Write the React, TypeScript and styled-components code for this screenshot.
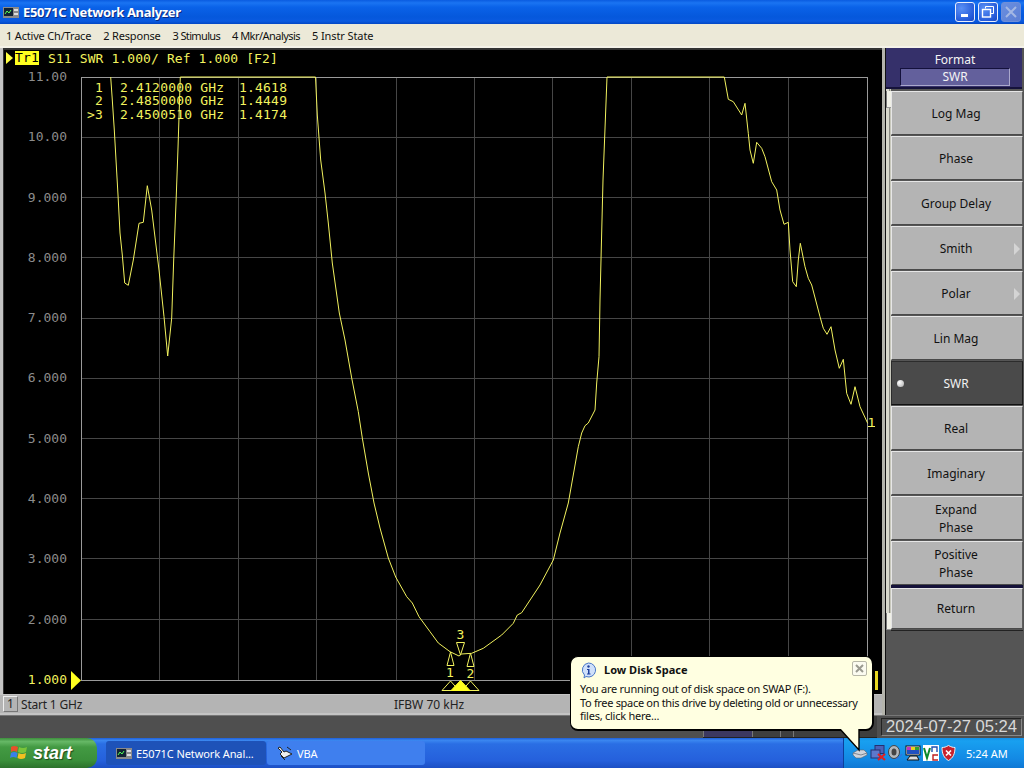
import React from 'react';
import styled, { createGlobalStyle } from 'styled-components';

const GlobalStyle = createGlobalStyle`
  html, body {
    margin: 0;
    padding: 0;
    width: 1024px;
    height: 768px;
    overflow: hidden;
    background: #000;
  }
  * { box-sizing: border-box; }
`;

const UI_FONT = '"Noto Sans", "DejaVu Sans", sans-serif';
const MONO_FONT = '"DejaVu Sans Mono", "Liberation Mono", monospace';

// Trace points in page pixels, read off the analyzer screen
const TRACE: [number, number][] = [
  [110.7, 77], [112.3, 100], [114.3, 130], [116, 160], [118, 195], [120, 233], [122.3, 255], [124.7, 283],
  [128.3, 285.3], [133.3, 260], [139, 223.3], [143.3, 222.3], [147.3, 185.7], [151.7, 210], [159, 270],
  [164, 316.7], [167.7, 356], [171.7, 318], [173.7, 260], [176, 203], [178, 148], [180.3, 77],
  [315.5, 77], [317.3, 115], [320.7, 160], [325, 193], [328.3, 223], [332.3, 263], [339.3, 313], [345, 340],
  [351.7, 378], [358.3, 411.7], [362.3, 438], [368.3, 473], [374, 503], [380, 528], [388.3, 558], [395.7, 577],
  [406.7, 596.7], [412.3, 603], [419, 616.7], [430, 631.7], [438.3, 643], [450, 651.7], [459, 656], [461.7, 654],
  [471.7, 653.3], [483.3, 648.3], [501.7, 635], [513.3, 623.3], [517.3, 615], [521.7, 612.7], [540, 585],
  [553.3, 560], [560, 533], [568.3, 503], [578.3, 446.7], [581.7, 433], [585, 425.7], [588.3, 423], [595, 410],
  [596.7, 383], [599, 356.7], [600, 300], [603, 180], [607, 77],
  [724.3, 77], [728.3, 99.3], [733.3, 101.7], [741.7, 115], [745, 103.3], [748.3, 133.3], [750, 150],
  [753.3, 163.3], [756.7, 142.3], [761.7, 148.3], [765, 156.7], [771.7, 181.7], [776.7, 190], [780, 210],
  [784, 224.3], [788.3, 222.3], [790, 250], [792.7, 281.7], [796.3, 286.7], [798.3, 260], [800.3, 243.3],
  [805, 266.7], [808.3, 278.3], [811.7, 285], [820, 316.7], [823.3, 328.3], [827, 334.3], [831, 326.7],
  [835, 350], [839.3, 368.3], [843.3, 359.3], [846.7, 393.3], [851, 404.3], [855, 386.7], [860, 406.7], [867.7, 423.3],
];

const GRID_X = [159, 238, 316, 396, 474, 552, 631, 709, 788];
const GRID_Y = [137, 197, 257, 318, 378, 438, 498, 558, 619];
const AXIS_LABELS = ['11.00', '10.00', '9.000', '8.000', '7.000', '6.000', '5.000', '4.000', '3.000', '2.000', '1.000'];

const MENU_ITEMS = [
  { label: '1 Active Ch/Trace', spacing: -0.18 },
  { label: '2 Response', spacing: -0.18 },
  { label: '3 Stimulus', spacing: -0.65 },
  { label: '4 Mkr/Analysis', spacing: -0.54 },
  { label: '5 Instr State', spacing: -0.1 },
];

const MARKERS = [
  { id: '1', freq: '2.4120000 GHz', value: '1.4618' },
  { id: '2', freq: '2.4850000 GHz', value: '1.4449' },
  { id: '>3', freq: '2.4500510 GHz', value: '1.4174' },
];

const SOFTKEYS: { label: string[]; arrow?: boolean; active?: boolean }[] = [
  { label: ['Log Mag'] },
  { label: ['Phase'] },
  { label: ['Group Delay'] },
  { label: ['Smith'], arrow: true },
  { label: ['Polar'], arrow: true },
  { label: ['Lin Mag'] },
  { label: ['SWR'], active: true },
  { label: ['Real'] },
  { label: ['Imaginary'] },
  { label: ['Expand', 'Phase'] },
  { label: ['Positive', 'Phase'] },
];

const Screen = styled.div`
  width: 1024px;
  height: 768px;
  display: flex;
  flex-direction: column;
  position: relative;
  overflow: hidden;
  font-family: ${UI_FONT};
`;

const TitleBar = styled.div`
  height: 24px;
  flex: none;
  display: flex;
  align-items: center;
  padding: 0 3px 0 3px;
  background: linear-gradient(180deg, #0a5be0 0%, #1a74f2 12%, #0a62e8 30%, #0558dc 70%, #0a5ae0 88%, #0347c4 100%);
`;

const WindowTitle = styled.div`
  margin-left: 4px;
  flex: 1;
  color: #fff;
  font: bold 13px "Noto Sans", sans-serif;
  letter-spacing: -0.35px;
  text-shadow: 1px 1px 0 #0a2a80;
`;

const WindowButton = styled.div<{ $disabled?: boolean }>`
  width: 20px;
  height: 20px;
  margin-left: 3px;
  border: 1px solid ${({ $disabled }) => ($disabled ? '#6f8fd8' : '#e8eefc')};
  border-radius: 3px;
  background: ${({ $disabled }) =>
    $disabled
      ? 'linear-gradient(135deg, #6a8fe0, #5c7fd4)'
      : 'radial-gradient(circle at 30% 30%, #5a90f5, #2358d8 75%, #1c48bc)'};
  display: flex;
  align-items: center;
  justify-content: center;
`;

const MenuBar = styled.div`
  height: 22px;
  flex: none;
  display: flex;
  align-items: center;
  gap: 12px;
  padding: 0 6px 0 6px;
  background: #ece9d8;
  font-size: 11px;
  color: #111;
`;

const MenuItem = styled.span<{ $spacing: number }>`
  letter-spacing: ${({ $spacing }) => $spacing}px;
`;

const Workspace = styled.div`
  height: 669px;
  flex: none;
  display: flex;
  background: #b8b8b0;
  border-top: 2px solid #f4f2e8;
`;

const ChartColumn = styled.div`
  width: 882px;
  flex: none;
  display: flex;
  flex-direction: column;
  background: #c4c4c4;
  padding-left: 3px;
`;

const ChartPanel = styled.div`
  height: 646px;
  flex: none;
  background: #000;
  border-top: 2px solid #333;
  border-left: 1px solid #333;
  display: flex;
  flex-direction: column;
`;

const TraceHeader = styled.div`
  height: 16px;
  flex: none;
  display: flex;
  align-items: center;
  padding-left: 2px;
  font: 13px ${MONO_FONT};
  letter-spacing: 0.1px;
  color: #f2f25e;
  white-space: pre;
`;

const ActiveArrow = styled.span`
  width: 0;
  height: 0;
  border-left: 7px solid #ffff40;
  border-top: 6px solid transparent;
  border-bottom: 6px solid transparent;
  margin-right: 2px;
`;

const TraceBadge = styled.span`
  background: #ffff20;
  color: #000;
  width: 24px;
  text-align: center;
  margin-right: 9px;
  line-height: 14px;
`;

const PlotRow = styled.div`
  flex: 1;
  display: flex;
  position: relative;
`;

const AxisColumn = styled.div`
  width: 66px;
  flex: none;
  height: 621px;
  padding: 4px 3px 0 0;
  display: flex;
  flex-direction: column;
  justify-content: space-between;
  align-items: flex-end;
  font: 13px/14px ${MONO_FONT};
`;

const AxisLabel = styled.span<{ $live?: boolean }>`
  color: ${({ $live }) => ($live ? '#f2f25e' : '#8c8c8c')};
`;

const PlotSvg = styled.svg`
  width: 812px;
  height: 628px;
  flex: none;
  display: block;
`;

const MarkerTable = styled.div`
  position: absolute;
  left: 76px;
  top: 15px;
  display: grid;
  grid-template-columns: 23px 136px auto;
  font: 13px/13.4px ${MONO_FONT};
  letter-spacing: 0.2px;
  color: #f2f25e;
  white-space: pre;
`;

const MarkerId = styled.span`
  text-align: right;
`;

const MarkerFreq = styled.span`
  padding-left: 17px;
`;

const StatusRow = styled.div`
  height: 18px;
  flex: none;
  margin-top: 1px;
  display: flex;
  align-items: center;
  background: #b4b4b4;
  font-size: 12px;
  color: #222;
  margin-left: -3px;
`;

const ChannelBox = styled.span`
  width: 15px;
  height: 16px;
  margin-left: 3px;
  border: 1px solid #eee;
  border-right-color: #777;
  border-bottom-color: #777;
  text-align: center;
  line-height: 14px;
`;

const StatusStart = styled.span`
  margin-left: 3px;
  width: 373px;
  letter-spacing: -0.2px;
`;

const SplitterGutter = styled.div`
  width: 4px;
  flex: none;
  background: #b4b4ac;
  border-right: 1px solid #111;
`;

const KeyColumn = styled.div`
  width: 138px;
  flex: none;
  display: flex;
  flex-direction: column;
  background: #555;
`;

const FormatHeader = styled.div`
  height: 41px;
  flex: none;
  margin-right: 2px;
  padding: 3px 0 0 2px;
  background: #35306a;
  border-bottom: 2px solid #15123a;
  display: flex;
  flex-direction: column;
  align-items: center;
  color: #f4f4f4;
  font-size: 12px;
  line-height: 17px;
`;

const FormatValue = styled.div`
  width: 110px;
  height: 18px;
  background: #63609c;
  border: 1px solid #aaa8cc;
  border-top-color: #14113c;
  border-left-color: #14113c;
  text-align: center;
  font-size: 12px;
  line-height: 16px;
`;

const KeyArea = styled.div`
  flex: 1;
  display: flex;
  min-height: 0;
`;

const KeyScroll = styled.div`
  width: 5px;
  height: 541px;
  flex: none;
  padding-top: 2px;
  display: flex;
  flex-direction: column;
  justify-content: space-between;
  background: linear-gradient(90deg, #d8d8cc 0 3px, #8c8c84 3px 4px, #c8c8bc 4px 5px);
`;

const ScrollGrip = styled.div`
  width: 5px;
  height: 17px;
  background: #f0f0e6;
  border-left: 1px solid #777;
  border-bottom: 1px solid #999;
`;

const KeyStack = styled.div`
  width: 132px;
  flex: none;
  display: flex;
  flex-direction: column;
  padding-top: 2px;
`;

const SoftKey = styled.div<{ $active?: boolean }>`
  position: relative;
  height: 44px;
  flex: none;
  margin-bottom: 1px;
  padding: 2px 2px 0 0;
  display: flex;
  flex-direction: column;
  align-items: center;
  justify-content: center;
  background: ${({ $active }) => ($active ? '#4a4a4a' : '#b4b4b4')};
  border: 1px solid;
  border-color: ${({ $active }) => ($active ? '#2c2c2c #1c1c1c #111 #2c2c2c' : '#e6e6e6 #5e5e5e #4a4a4a #e6e6e6')};
  color: ${({ $active }) => ($active ? '#f2f2f2' : '#111')};
  font-size: 12px;
  line-height: 18px;
`;

const ActiveDot = styled.span`
  position: absolute;
  left: 5px;
  top: 18px;
  width: 7px;
  height: 7px;
  border-radius: 50%;
  background: radial-gradient(circle at 35% 35%, #fff, #aaa);
`;

const KeyArrow = styled.span`
  position: absolute;
  right: 2px;
  top: 16px;
  width: 0;
  height: 0;
  border-left: 6px solid #d4d4d4;
  border-top: 6px solid transparent;
  border-bottom: 6px solid transparent;
`;

const KeyDivider = styled.div`
  height: 3px;
  flex: none;
  margin-top: -1px;
  background: #15123a;
`;

const ReturnKey = styled(SoftKey)`
  height: 41px;
  padding-top: 0;
`;

const KeyFiller = styled.div`
  flex: 1;
  background: #555;
  border-top: 1px solid #222;
`;

const InfoBand = styled.div`
  height: 23px;
  flex: none;
  display: flex;
  align-items: center;
  justify-content: flex-end;
  padding-right: 2px;
  background: #4f4f4f;
  border-top: 1px solid #777;
`;

const BandCells = styled.div`
  align-self: stretch;
  display: flex;
  margin-right: 4px;
  border-bottom: 1px solid #222;
`;

const BandCell = styled.div<{ $width: number; $tint?: boolean }>`
  width: ${({ $width }) => $width}px;
  background: ${({ $tint }) => ($tint ? '#3c3860' : '#3e3e3e')};
  border-left: 1px solid #777;
`;

const ClockBox = styled.div`
  width: 141px;
  height: 18px;
  border: 1px solid #888;
  border-top-color: #222;
  border-left-color: #222;
  color: #d8d8d8;
  font: 16.6px/16px "Liberation Sans", sans-serif;
  text-align: center;
  white-space: nowrap;
`;

const Taskbar = styled.div`
  flex: 1;
  display: flex;
  align-items: center;
  background: linear-gradient(180deg, #1f5fd8 0%, #3a86f0 8%, #2a6ee4 20%, #2560dc 75%, #1c4fc4 100%);
`;

const StartButton = styled.div`
  width: 97px;
  height: 100%;
  display: flex;
  align-items: center;
  gap: 5px;
  padding-left: 10px;
  border-radius: 0 10px 10px 0;
  background: linear-gradient(180deg, #3d8f3d 0%, #66b866 12%, #439a43 30%, #3a8f3a 75%, #2c722c 100%);
  color: #fff;
  font: italic bold 18px "Liberation Sans", sans-serif;
  text-shadow: 1px 1px 1px #1c4a1c;
`;

const TaskButton = styled.div<{ $active?: boolean }>`
  width: ${({ $active }) => ($active ? '160px' : '158px')};
  height: 24px;
  margin-left: ${({ $active }) => ($active ? '9px' : '1px')};
  display: flex;
  align-items: center;
  gap: 4px;
  padding-left: 10px;
  border-radius: 3px;
  background: ${({ $active }) => ($active ? '#1e52b8' : '#3f7fee')};
  color: #fff;
  font-size: 11px;
  letter-spacing: -0.1px;
  white-space: nowrap;
`;

const Tray = styled.div`
  margin-left: auto;
  width: 181px;
  height: 100%;
  display: flex;
  align-items: center;
  padding-left: 8px;
  gap: 2px;
  background: linear-gradient(180deg, #1590e8 0%, #18a0f0 10%, #1389e4 70%, #0f78d4 100%);
  border-left: 1px solid #0c3f9c;
  color: #fff;
  font-size: 11px;
`;

const TrayClock = styled.span`
  margin-left: 8px;
`;

const Balloon = styled.div`
  position: absolute;
  left: 570px;
  top: 656px;
  width: 304px;
  height: 75px;
  background: #ffffe1;
  border: 1px solid #000;
  border-right-width: 2px;
  border-bottom-width: 2px;
  border-radius: 8px;
  padding: 5px 9px;
  color: #111;
  font-size: 11px;
  line-height: 13.5px;
`;

const BalloonTitle = styled.div`
  display: flex;
  align-items: center;
  gap: 7px;
  font-weight: bold;
  height: 16px;
  margin-bottom: 4px;
`;

const BalloonLine = styled.div<{ $spacing: number }>`
  letter-spacing: ${({ $spacing }) => $spacing}px;
  white-space: nowrap;
`;

const BalloonClose = styled.div`
  position: absolute;
  right: 5px;
  top: 4px;
  width: 15px;
  height: 15px;
  border: 1px solid #b8b8a8;
  border-radius: 2px;
  background: #fbfbf0;
  display: flex;
  align-items: center;
  justify-content: center;
`;

const BalloonTail = styled.svg`
  position: absolute;
  left: 838px;
  top: 729px;
  width: 24px;
  height: 24px;
`;

const AppIcon = () => (
  <svg width="16" height="11" viewBox="0 0 16 11">
    <rect width="16" height="11" fill="#8a8a8a" />
    <rect x="1" y="1" width="9" height="8" fill="#123" />
    <path d="M2 7 L4 4 L6 6 L8 3" stroke="#5f5" fill="none" />
    <rect x="11" y="2" width="4" height="2" fill="#ddd" />
    <rect x="11" y="6" width="4" height="2" fill="#ddd" />
  </svg>
);

const XpFlag = () => (
  <svg width="18" height="18" viewBox="0 0 18 18">
    <path d="M1 3 Q4 1 8 3 L7 8 Q4 6 1 8 Z" fill="#e8502a" />
    <path d="M9 3 Q13 5 17 3 L16 8 Q12 10 8 8 Z" fill="#7ac43a" />
    <path d="M1 9 Q4 7 7.5 9 L6.5 14 Q3.5 12 0 14 Z" fill="#3a80e8" />
    <path d="M8.5 9 Q12 11 16 9 L15 14 Q11 16 7.5 14 Z" fill="#f4c020" />
  </svg>
);

const VbaIcon = () => (
  <svg width="16" height="16" viewBox="0 0 16 16">
    <path d="M1 3 L5 7 L3 9 L7 13 L15 9 L9 6 L7 7 L3 2 Z" fill="#eee" stroke="#222" />
    <path d="M10 2 L14 5 M4 11 L8 15" stroke="#222" />
  </svg>
);

const InfoIcon = () => (
  <svg width="17" height="17" viewBox="0 0 17 17">
    <path d="M8.5 1 A7 7 0 1 1 6 14.5 L4 16 L4.5 13 A7 7 0 0 1 8.5 1 Z" fill="#cfe0fa" stroke="#4a78c8" />
    <circle cx="8.5" cy="4.5" r="1.2" fill="#1c3f9c" />
    <path d="M7 7 H9.5 V11.5 H10.5 V12.5 H7 V11.5 H8 V8 H7 Z" fill="#1c3f9c" />
  </svg>
);

const TrayIcons = () => (
  <>
    <svg width="16" height="14" viewBox="0 0 16 14">
      <path d="M1 7 L6 4 H12 L15 7 V9 L9 12 H4 L1 9 Z" fill="#cfd4dc" stroke="#5c6470" strokeWidth="0.6" />
      <path d="M1 7 L9 9 L15 7" fill="none" stroke="#6c7480" strokeWidth="0.8" />
    </svg>
    <svg width="16" height="16" viewBox="0 0 16 16">
      <rect x="5" y="0.5" width="9" height="8" fill="#4a62b8" stroke="#243070" />
      <rect x="1" y="5" width="9" height="8" fill="#5c78cc" stroke="#243070" />
      <path d="M8 9 L15 15 M15 9 L8 15" stroke="#e02020" strokeWidth="2.2" />
    </svg>
    <svg width="15" height="16" viewBox="0 0 15 16">
      <ellipse cx="6" cy="7" rx="5.5" ry="6.5" fill="#b4b8bc" stroke="#444" />
      <ellipse cx="6" cy="7" rx="2.5" ry="3.5" fill="#444" />
      <path d="M8 14 Q12 13 14 9" stroke="#3a6ae0" fill="none" />
    </svg>
    <svg width="16" height="16" viewBox="0 0 16 16">
      <rect x="1" y="1" width="14" height="9" fill="#fff" stroke="#111" />
      <rect x="2" y="2" width="4" height="3" fill="#c030c0" />
      <rect x="6" y="2" width="4" height="3" fill="#e8d020" />
      <rect x="10" y="2" width="4" height="3" fill="#30a030" />
      <rect x="2" y="5" width="12" height="4" fill="#2050c0" />
      <path d="M5 11 H12 L14 15 H2 Z" fill="#ddd" stroke="#111" />
    </svg>
    <svg width="16" height="16" viewBox="0 0 16 16">
      <rect width="16" height="16" fill="#fff" />
      <path d="M1 3 L4 13 L7 3" fill="none" stroke="#0a8a2a" strokeWidth="2" />
      <path d="M9 7 V2 H14 V7" fill="none" stroke="#2050b0" strokeWidth="1.4" />
      <path d="M15 10 H10 V15 H15" fill="none" stroke="#c02020" strokeWidth="1.4" />
    </svg>
    <svg width="15" height="16" viewBox="0 0 15 16">
      <path d="M7.5 0.5 C10 2 12 2.5 14 2.5 C14 9 12 13 7.5 15.5 C3 13 1 9 1 2.5 C3 2.5 5 2 7.5 0.5 Z" fill="#c8202c" stroke="#eee" />
      <path d="M5 5.5 L10 10.5 M10 5.5 L5 10.5" stroke="#fff" strokeWidth="1.6" />
    </svg>
  </>
);

const MarkerGlyphs = () => {
  const yellow = '#f2f25e';
  return (
    <g fill="none" stroke={yellow} strokeWidth="1">
      <path d="M450.5 652 L447 665.5 H454 Z" />
      <path d="M470.5 653 L467 666.5 H474 Z" />
      <path d="M456.5 642.5 H464.5 L460.5 655 Z" />
      <path d="M442 690.5 L450.5 681 L459 690.5 Z" />
      <path d="M462 690.5 L470.5 681 L479 690.5 Z" />
      <path d="M451 690.5 L460.5 680.5 L470 690.5 Z" fill="#ffff20" stroke="#ffff20" />
      <g stroke="none" fill={yellow} fontFamily={MONO_FONT} fontSize="13" textAnchor="middle">
        <text x="450" y="677">1</text>
        <text x="470.5" y="678">2</text>
        <text x="460.5" y="639">3</text>
        <text x="871.5" y="427">1</text>
      </g>
      <path d="M868 426.5 H875" />
    </g>
  );
};

const TracePlot = () => {
  const points = TRACE.map(([x, y]) => `${x},${y}`).join(' ');
  return (
    <PlotSvg viewBox="70 66 812 628">
      {GRID_X.map((x) => (
        <line key={x} x1={x + 0.5} x2={x + 0.5} y1={77} y2={680} stroke="#464646" />
      ))}
      {GRID_Y.map((y) => (
        <line key={y} x1={81} x2={867} y1={y + 0.5} y2={y + 0.5} stroke="#464646" />
      ))}
      <rect x={81.5} y={77.5} width={786} height={603} fill="none" stroke="#9a9a9a" />
      <polyline points={points} fill="none" stroke="#f2f25e" strokeWidth="1" />
      <path d="M71 671 L81 680.5 L71 690 Z" fill="#ffff20" />
      <path d="M878 671 H875 V690 H878 Z" fill="#e8d820" />
      <MarkerGlyphs />
    </PlotSvg>
  );
};

const App: React.FC = () => {
  return (
    <Screen>
      <GlobalStyle />
      <TitleBar>
        <AppIcon />
        <WindowTitle>E5071C Network Analyzer</WindowTitle>
        <WindowButton>
          <svg width="12" height="12" viewBox="0 0 12 12"><rect x="2" y="8" width="7" height="3" fill="#fff" /></svg>
        </WindowButton>
        <WindowButton>
          <svg width="14" height="14" viewBox="0 0 14 14" fill="none" stroke="#fff">
            <path d="M4.5 3.5 V1.5 H12.5 V8.5 H10" />
            <rect x="1.5" y="4.5" width="8" height="7.5" strokeWidth="1.4" />
          </svg>
        </WindowButton>
        <WindowButton $disabled>
          <svg width="14" height="14" viewBox="0 0 14 14" stroke="#a4b8e4" strokeWidth="2">
            <path d="M2 2 L12 12 M12 2 L2 12" />
          </svg>
        </WindowButton>
      </TitleBar>
      <MenuBar>
        {MENU_ITEMS.map((item) => (
          <MenuItem key={item.label} $spacing={item.spacing}>{item.label}</MenuItem>
        ))}
      </MenuBar>
      <Workspace>
        <ChartColumn>
          <ChartPanel>
            <TraceHeader>
              <ActiveArrow />
              <TraceBadge>Tr1</TraceBadge>
              S11 SWR 1.000/ Ref 1.000 [F2]
            </TraceHeader>
            <PlotRow>
              <AxisColumn>
                {AXIS_LABELS.map((label) => (
                  <AxisLabel key={label} $live={label === '1.000'}>{label}</AxisLabel>
                ))}
              </AxisColumn>
              <TracePlot />
              <MarkerTable>
                {MARKERS.map((m) => (
                  <React.Fragment key={m.id}>
                    <MarkerId>{m.id}</MarkerId>
                    <MarkerFreq>{m.freq}</MarkerFreq>
                    <span>{m.value}</span>
                  </React.Fragment>
                ))}
              </MarkerTable>
            </PlotRow>
          </ChartPanel>
          <StatusRow>
            <ChannelBox>1</ChannelBox>
            <StatusStart>Start 1 GHz</StatusStart>
            <span>IFBW 70 kHz</span>
          </StatusRow>
        </ChartColumn>
        <SplitterGutter />
        <KeyColumn>
          <FormatHeader>
            Format
            <FormatValue>SWR</FormatValue>
          </FormatHeader>
          <KeyArea>
            <KeyScroll>
              <ScrollGrip />
              <ScrollGrip />
            </KeyScroll>
            <KeyStack>
              {SOFTKEYS.map((key) => (
                <SoftKey key={key.label.join(' ')} $active={key.active}>
                  {key.active && <ActiveDot />}
                  {key.label.map((line) => <span key={line}>{line}</span>)}
                  {key.arrow && <KeyArrow />}
                </SoftKey>
              ))}
              <KeyDivider />
              <ReturnKey>Return</ReturnKey>
              <KeyFiller />
            </KeyStack>
          </KeyArea>
        </KeyColumn>
      </Workspace>
      <InfoBand>
        <BandCells>
          <BandCell $width={49} $tint />
          <BandCell $width={28} />
          <BandCell $width={13} />
          <BandCell $width={84} />
        </BandCells>
        <ClockBox>2024-07-27 05:24</ClockBox>
      </InfoBand>
      <Taskbar>
        <StartButton>
          <XpFlag />
          start
        </StartButton>
        <TaskButton $active>
          <AppIcon />
          E5071C Network Anal...
        </TaskButton>
        <TaskButton>
          <VbaIcon />
          VBA
        </TaskButton>
        <Tray>
          <TrayIcons />
          <TrayClock>5:24 AM</TrayClock>
        </Tray>
      </Taskbar>
      <Balloon>
        <BalloonTitle>
          <InfoIcon />
          Low Disk Space
        </BalloonTitle>
        <BalloonClose>
          <svg width="9" height="9" viewBox="0 0 9 9" stroke="#9a9a90" strokeWidth="2">
            <path d="M1 1 L8 8 M8 1 L1 8" />
          </svg>
        </BalloonClose>
        <BalloonLine $spacing={-0.25}>You are running out of disk space on SWAP (F:).</BalloonLine>
        <BalloonLine $spacing={-0.32}>To free space on this drive by deleting old or unnecessary</BalloonLine>
        <BalloonLine $spacing={-0.25}>files, click here...</BalloonLine>
      </Balloon>
      <BalloonTail viewBox="0 0 24 24">
        <path d="M2 0 L21 21 L21 0 Z" fill="#ffffe1" />
        <path d="M2 0 L21 21 L21 0" fill="none" stroke="#000" strokeWidth="1.4" />
      </BalloonTail>
    </Screen>
  );
};

export default App;
